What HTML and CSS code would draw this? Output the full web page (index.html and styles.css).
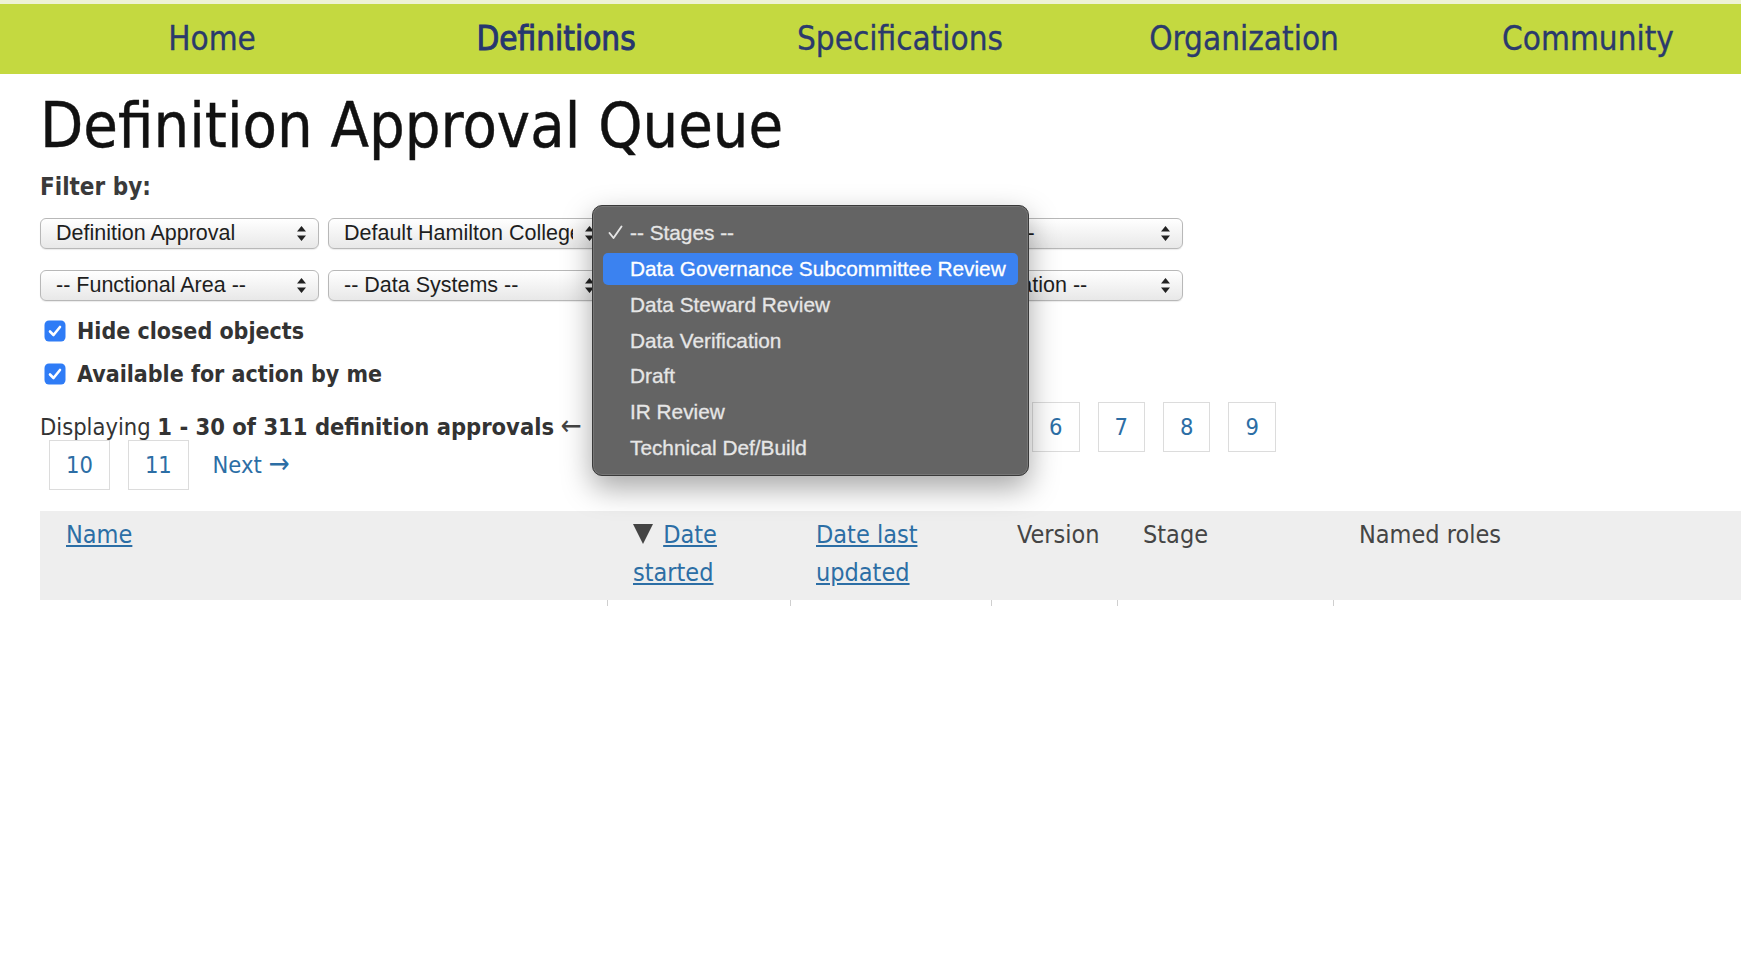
FILE: index.html
```html
<!DOCTYPE html>
<html lang="en">
<head>
    <meta charset="UTF-8">
    <meta name="viewport" content="width=device-width, initial-scale=1.0">
    <title>Definition Approval Queue</title>
    <link rel="stylesheet" href="styles.css">
</head>
<body>
    <!-- Main navigation -->
    <nav class="top-nav">
        <a href="#">Home</a>
        <a href="#" class="active">Definitions</a>
        <a href="#">Specifications</a>
        <a href="#">Organization</a>
        <a href="#">Community</a>
    </nav>

    <div class="page">
        <h1 class="page-title">Definition Approval Queue</h1>
        <div class="filter-label">Filter by:</div>

        <!-- Filter selects -->
        <div class="filter-row">
            <div class="select"><span>Definition Approval</span><svg width="9" height="15" viewBox="0 0 9 15"><path d="M4.5 0L9 5.5H0z M4.5 15L0 9.5h9z" fill="#222"/></svg></div>
            <div class="select"><span>Default Hamilton College Glossary</span><svg width="9" height="15" viewBox="0 0 9 15"><path d="M4.5 0L9 5.5H0z M4.5 15L0 9.5h9z" fill="#222"/></svg></div>
            <div class="select"><span>-- Stages --</span><svg width="9" height="15" viewBox="0 0 9 15"><path d="M4.5 0L9 5.5H0z M4.5 15L0 9.5h9z" fill="#222"/></svg></div>
            <div class="select"><span>-- Owners --</span><svg width="9" height="15" viewBox="0 0 9 15"><path d="M4.5 0L9 5.5H0z M4.5 15L0 9.5h9z" fill="#222"/></svg></div>
        </div>
        <div class="filter-row">
            <div class="select"><span>-- Functional Area --</span><svg width="9" height="15" viewBox="0 0 9 15"><path d="M4.5 0L9 5.5H0z M4.5 15L0 9.5h9z" fill="#222"/></svg></div>
            <div class="select"><span>-- Data Systems --</span><svg width="9" height="15" viewBox="0 0 9 15"><path d="M4.5 0L9 5.5H0z M4.5 15L0 9.5h9z" fill="#222"/></svg></div>
            <div class="select"><span>-- Tags --</span><svg width="9" height="15" viewBox="0 0 9 15"><path d="M4.5 0L9 5.5H0z M4.5 15L0 9.5h9z" fill="#222"/></svg></div>
            <div class="select"><span>-- Classification --</span><svg width="9" height="15" viewBox="0 0 9 15"><path d="M4.5 0L9 5.5H0z M4.5 15L0 9.5h9z" fill="#222"/></svg></div>
        </div>

        <label class="check first">
            <svg class="box" width="22" height="22" viewBox="0 0 22 22"><rect x="0.5" y="0.5" width="21" height="21" rx="4.5" fill="#2f7cf6"/><path d="M6 11.5l3.5 3.5 6.5-8" fill="none" stroke="#fff" stroke-width="2.6" stroke-linecap="round" stroke-linejoin="round"/></svg>
            Hide closed objects
        </label>
        <label class="check">
            <svg class="box" width="22" height="22" viewBox="0 0 22 22"><rect x="0.5" y="0.5" width="21" height="21" rx="4.5" fill="#2f7cf6"/><path d="M6 11.5l3.5 3.5 6.5-8" fill="none" stroke="#fff" stroke-width="2.6" stroke-linecap="round" stroke-linejoin="round"/></svg>
            Available for action by me
        </label>

        <!-- Paging -->
        <div class="pager">Displaying <b>1 - 30 of 311 definition approvals</b> <span class="prev"><span class="arrow">&larr;</span> Previous</span><wbr><a href="#" class="num">1</a><wbr><a href="#" class="num">2</a><wbr><a href="#" class="num">3</a><wbr><a href="#" class="num">4</a><wbr><a href="#" class="num">5</a><wbr><a href="#" class="num">6</a><wbr><a href="#" class="num">7</a><wbr><a href="#" class="num">8</a><wbr><a href="#" class="num">9</a><wbr><a href="#" class="num">10</a><wbr><a href="#" class="num">11</a> <a href="#" class="next">Next <span class="arrow">&rarr;</span></a></div>

        <table class="queue">
            <thead>
                <tr>
                    <th class="c-name"><a href="#">Name</a></th>
                    <th class="c-start"><svg class="sort" width="20" height="20" viewBox="0 0 20 20"><path d="M0 0h20L10 20z" fill="#444"/></svg> <a href="#">Date started</a></th>
                    <th class="c-update"><a href="#">Date last updated</a></th>
                    <th class="c-version">Version</th>
                    <th class="c-stage">Stage</th>
                    <th>Named roles</th>
                </tr>
            </thead>
            <tbody>
                <tr class="ticks"><td></td><td></td><td></td><td></td><td></td><td></td></tr>
            </tbody>
        </table>
    </div>

    <!-- Open stage dropdown -->
    <div class="stage-menu">
        <div class="item"><svg class="tick" width="15" height="15" viewBox="0 0 15 15"><path d="M1.5 8l4 5 8-11.5" fill="none" stroke="#e6e6e6" stroke-width="1.9" stroke-linecap="round" stroke-linejoin="round"/></svg>-- Stages --</div>
        <div class="item selected">Data Governance Subcommittee Review</div>
        <div class="item">Data Steward Review</div>
        <div class="item">Data Verification</div>
        <div class="item">Draft</div>
        <div class="item">IR Review</div>
        <div class="item">Technical Def/Build</div>
    </div>
</body>
</html>
```

FILE: styles.css
```css
body {
    margin: 0;
    font-family: "DejaVu Sans Condensed", "Liberation Sans", sans-serif;
    color: #333;
    background: #fff;
    position: relative;
    overflow: hidden;
    height: 980px;
}

/* Top navigation */
.top-nav {
    display: flex;
    border-top: 4px solid #eef2d4;
    padding-left: 40px;
    height: 70px;
    background: #c4d940;
    overflow: hidden;
}

.top-nav a {
    flex: 0 0 344px;
    text-align: center;
    line-height: 70px;
    font-size: 33px;
    color: #2b3a6c;
    text-decoration: none;
    -webkit-text-stroke: 0.3px #2b3a6c;
}

.top-nav a.active {
    color: #26366f;
    -webkit-text-stroke: 0.9px #26366f;
}

/* Page body */
.page {
    padding-left: 40px;
}

.page-title {
    margin: 20px 0 0;
    font-size: 62.6px;
    line-height: 64px;
    font-weight: normal;
    color: #111;
    -webkit-text-stroke: 0.4px #111;
}

.filter-label {
    margin-top: 14px;
    font-size: 24px;
    line-height: 30px;
    font-weight: bold;
    color: #3a3a3a;
}

.filter-row {
    display: flex;
    gap: 9px;
    margin-top: 16px;
}

.filter-row + .filter-row {
    margin-top: 21px;
}

.select {
    width: 279px;
    height: 31px;
    box-sizing: border-box;
    display: flex;
    align-items: center;
    padding: 0 12px 0 15px;
    border: 1px solid #b8b8b8;
    border-radius: 6px;
    background: linear-gradient(#ffffff, #e8e8e8);
    box-shadow: 0 1px 1px rgba(0, 0, 0, 0.08);
    font-family: "Liberation Sans", Arial, sans-serif;
    font-size: 21.5px;
    color: #1e1e1e;
}

.select span {
    flex: 1;
    overflow: hidden;
    white-space: nowrap;
    margin-right: 12px;
}

.check {
    display: flex;
    align-items: center;
    height: 43px;
    font-size: 23px;
    font-weight: bold;
    color: #333;
}

.check.first {
    margin-top: 8px;
}

.check .box {
    margin: 0 11px 0 4px;
}

/* Paging */
.pager {
    margin-top: 13px;
    max-width: 1270px;
    font-size: 23.5px;
    line-height: 38px;
    color: #333;
}

.pager .arrow {
    font-size: 28px;
    line-height: 0;
}

.pager .prev {
    color: #444;
    word-spacing: 5px;
    margin-right: 13px;
}

.pager .num {
    padding: 10px 16px;
    margin: 0 9px;
    border: 1px solid #dcdcdc;
    color: #2c6ea5;
    text-decoration: none;
}

.pager .next {
    margin-left: 8px;
    color: #2c6ea5;
    text-decoration: none;
}

/* Results table */
.queue {
    margin-top: 27px;
    width: 100%;
    table-layout: fixed;
    border-collapse: collapse;
}

.queue th {
    background: #eeeeee;
    text-align: left;
    vertical-align: top;
    font-weight: normal;
    font-size: 25px;
    line-height: 38px;
    color: #454545;
    padding: 5px 26px 8px;
}

.queue th a {
    color: #2c6ea5;
}

.queue .c-name { width: 515px; }
.queue .c-start { width: 131px; }
.queue .c-update { width: 149px; }
.queue .c-version { width: 74px; }
.queue .c-stage { width: 164px; }

.queue .sort {
    vertical-align: -1px;
    margin-right: 3px;
}

.ticks td {
    height: 6px;
    padding: 0;
}

.ticks td + td {
    border-left: 1px solid #cfcfcf;
}

/* Native-looking dropdown popup */
.stage-menu {
    position: absolute;
    left: 592px;
    top: 205px;
    width: 437px;
    height: 271px;
    box-sizing: border-box;
    display: flex;
    flex-direction: column;
    padding: 9px 0;
    background: #646464;
    border: 1px solid #3a3a3a;
    border-radius: 10px;
    box-shadow: 0 12px 30px rgba(0, 0, 0, 0.35), inset 0 0 0 1px rgba(255, 255, 255, 0.12);
    font-family: "Liberation Sans", Arial, sans-serif;
    font-size: 20.8px;
    color: #e6e6e6;
}

.stage-menu .item {
    display: flex;
    align-items: center;
    height: 32px;
    margin: 2px 10px;
    padding-left: 27px;
    border-radius: 5px;
    -webkit-text-stroke: 0.3px currentColor;
}

.stage-menu .item.selected {
    background: #3b82f0;
    color: #fff;
}

.stage-menu .tick {
    margin-left: -22px;
    margin-right: 7px;
}
```
